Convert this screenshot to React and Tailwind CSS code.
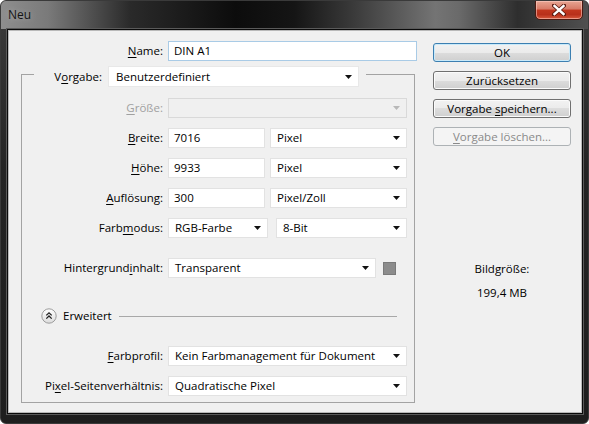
import React from "react";

const Arrow = ({ disabled }) => (
  <svg width="7" height="4" viewBox="0 0 7 4" className="shrink-0">
    <path d="M0 0H7L3.5 4Z" fill={disabled ? "#b8b8b8" : "#111"} />
  </svg>
);

function Select({ w, children, disabled }) {
  return (
    <div
      className={`h-[20px] flex items-center justify-between pl-[6px] pr-[6px] border ${
        disabled ? "bg-[#f0f0f0] border-[#d9d9d9]" : "bg-white border-[#e2e2e2]"
      } ${w}`}
    >
      <span className="whitespace-nowrap">{children}</span>
      <Arrow disabled={disabled} />
    </div>
  );
}

function Input({ w, children, focus }) {
  return (
    <div
      className={`h-[20px] flex items-center pl-[5px] border bg-white ${
        focus ? "border-[#a9cbe6]" : "border-[#e2e2e2]"
      } ${w}`}
    >
      {children}
    </div>
  );
}

function Row({ label, children, className = "" }) {
  return (
    <div className={`flex items-center h-[20px] ${className}`}>
      <div className="w-[141px] text-right whitespace-nowrap">{label}</div>
      <div className="ml-[5px] flex items-center">{children}</div>
    </div>
  );
}

const U = ({ children }) => (
  <span className="underline underline-offset-[2px] decoration-1">{children}</span>
);

function Button({ children, focus, disabled, className = "" }) {
  return (
    <div
      className={`h-[19px] w-[138px] rounded-[3px] flex items-center justify-center border ${
        disabled
          ? "border-[#adb2b5] bg-[#f4f4f4] text-[#8a8a8a]"
          : focus
          ? "border-[#3c7fb1] bg-[linear-gradient(#f2f2f2_0%,#ebebeb_50%,#dddddd_50%,#cfcfcf_100%)] shadow-[inset_0_0_0_1px_#c9eafa]"
          : "border-[#707070] bg-[linear-gradient(#f2f2f2_0%,#ebebeb_50%,#dddddd_50%,#cfcfcf_100%)] shadow-[inset_0_0_0_1px_#fbfbfb]"
      } ${className}`}
    >
      {children}
    </div>
  );
}

export default function App() {
  return (
    <div
      className="w-[589px] h-[424px] bg-white text-[11.5px] leading-[16px] text-black"
      style={{}}
    >
      <div className="w-[589px] h-[424px] flex flex-col rounded-[6px] overflow-hidden border border-[#3a3a3a] bg-[linear-gradient(to_bottom,#3c3c3c,#242424_40%,#1e1e1e)] font-['Open_Sans',sans-serif]">
        {/* title bar */}
        <div className="h-[28px] shrink-0 flex items-start justify-between bg-[linear-gradient(to_right,#8e8e8e_0%,#7a7a7a_8%,#2a2a2a_22%,#0c0c0c_40%,#151515_50%,#3a3a3a_60%,#747474_74%,#6a6a6a_78%,#2e2e2e_88%,#505050_100%)]">
          <div className="pl-[7px] pt-[6px] text-[12px] text-[#141414] [text-shadow:0_0_6px_rgba(255,255,255,0.35)]">
            Neu
          </div>
          <div className="mr-[5px] mt-[-1px] w-[48px] h-[20px] rounded-b-[5px] border border-[#4a1a12] bg-[linear-gradient(#e8a593_0%,#d77a66_45%,#c2371f_50%,#b8301b_75%,#d65a3e_100%)] shadow-[inset_0_0_0_1px_rgba(255,210,200,0.55)] flex items-center justify-center">
            <svg width="14" height="12" viewBox="0 0 14 12">
              <path d="M2 1.5L12 10.5M12 1.5L2 10.5" stroke="#5a1a10" strokeWidth="4" strokeLinecap="square" />
              <path d="M2.5 2L11.5 10M11.5 2L2.5 10" stroke="#fff" strokeWidth="2.4" strokeLinecap="square" />
            </svg>
          </div>
        </div>

        {/* body */}
        <div className="flex-1 pl-[6px] pr-[5px] pb-[9px] flex">
          <div className="flex-1 border border-[#0a0a0a] shadow-[0_0_0_1px_#5a5a5a]">
            <div className="h-full bg-[#f0f0f0] border border-[#b9b9b9] flex pl-[12px] pt-[10px]">
              {/* left column */}
              <div className="w-[396px] flex flex-col">
                <div className="flex items-center h-[20px]">
                  <div className="w-[142px] text-right">
                    <U>N</U>ame:
                  </div>
                  <div className="ml-[5px]">
                    <Input w="w-[249px]" focus>
                      DIN A1
                    </Input>
                  </div>
                </div>

                {/* group */}
                <div className="w-[394px] mt-[5px]">
                  <div className="flex h-[21px]">
                    <div className="w-[13px] h-[13px] mt-[8px] border-t border-l border-[#a3a3a3]" />
                    <div className="w-[68px] text-right self-center whitespace-nowrap">
                      V<U>o</U>rgabe:
                    </div>
                    <div className="ml-[6px]">
                      <div className="h-[21px] w-[251px] flex items-center justify-between pl-[7px] pr-[6px] bg-white border border-[#e8e8e8]">
                        <span>Benutzerdefiniert</span>
                        <Arrow />
                      </div>
                    </div>
                    <div className="flex-1 ml-[7px] h-[13px] mt-[8px] border-t border-r border-[#a3a3a3]" />
                  </div>

                  <div className="border-l border-r border-b border-[#a3a3a3] pt-[11px] pb-[6px] flex flex-col">
                    <Row
                      label={
                        <span className="text-[#a0a0a0]">
                          <U>G</U>röße:
                        </span>
                      }
                    >
                      <Select w="w-[239px]" disabled>
                        {""}
                      </Select>
                    </Row>
                    <Row
                      className="mt-[10px]"
                      label={
                        <>
                          <U>B</U>reite:
                        </>
                      }
                    >
                      <Input w="w-[97px]">7016</Input>
                      <div className="ml-[5px]">
                        <Select w="w-[137px]">Pixel</Select>
                      </div>
                    </Row>
                    <Row
                      className="mt-[10px]"
                      label={
                        <>
                          <U>H</U>öhe:
                        </>
                      }
                    >
                      <Input w="w-[97px]">9933</Input>
                      <div className="ml-[5px]">
                        <Select w="w-[137px]">Pixel</Select>
                      </div>
                    </Row>
                    <Row
                      className="mt-[10px]"
                      label={
                        <>
                          <U>A</U>uflösung:
                        </>
                      }
                    >
                      <Input w="w-[97px]">300</Input>
                      <div className="ml-[5px]">
                        <Select w="w-[137px]">Pixel/Zoll</Select>
                      </div>
                    </Row>
                    <Row
                      className="mt-[10px]"
                      label={
                        <>
                          Farb<U>m</U>odus:
                        </>
                      }
                    >
                      <Select w="w-[100px]">RGB-Farbe</Select>
                      <div className="ml-[8px]">
                        <Select w="w-[131px]">8-Bit</Select>
                      </div>
                    </Row>
                    <Row
                      className="mt-[20px]"
                      label={
                        <>
                          Hintergrund<U>i</U>nhalt:
                        </>
                      }
                    >
                      <Select w="w-[208px]">Transparent</Select>
                      <div className="ml-[7px] w-[13px] h-[13px] bg-[#8c8c8c] border border-[#7a7a7a]" />
                    </Row>

                    {/* Erweitert */}
                    <div className="mt-[30px] h-[16px] flex items-center">
                      <svg width="16" height="16" viewBox="0 0 16 16" className="ml-[19px] shrink-0">
                        <defs>
                          <linearGradient id="eg" x1="0" y1="0" x2="0" y2="1">
                            <stop offset="0" stopColor="#ffffff" />
                            <stop offset="1" stopColor="#dcdcdc" />
                          </linearGradient>
                        </defs>
                        <circle cx="8" cy="8" r="7.2" fill="url(#eg)" stroke="#9c9c9c" strokeWidth="1" />
                        <path d="M5.3 7.4L8 4.8L10.7 7.4M5.3 10.6L8 8L10.7 10.6" fill="none" stroke="#222" strokeWidth="1.3" />
                      </svg>
                      <span className="ml-[6px]">Erweitert</span>
                      <div className="flex-1 ml-[7px] mr-[17px] border-t border-[#a8a8a8]" />
                    </div>

                    <Row
                      className="mt-[22px]"
                      label={
                        <>
                          <U>F</U>arbprofil:
                        </>
                      }
                    >
                      <Select w="w-[239px]">Kein Farbmanagement für Dokument</Select>
                    </Row>
                    <Row
                      className="mt-[10px]"
                      label={
                        <>
                          Pi<U>x</U>el-Seitenverhältnis:
                        </>
                      }
                    >
                      <Select w="w-[239px]">Quadratische Pixel</Select>
                    </Row>
                  </div>
                </div>
              </div>

              {/* right column */}
              <div className="ml-[16px] w-[138px] flex flex-col">
                <Button focus className="mt-[2px]">
                  OK
                </Button>
                <Button className="mt-[9px]">Zurücksetzen</Button>
                <Button className="mt-[9px]">
                  <span>
                    Vorgabe <U>s</U>peichern...
                  </span>
                </Button>
                <Button disabled className="mt-[9px]">
                  <span>
                    <U>V</U>orgabe löschen...
                  </span>
                </Button>
                <div className="mt-[115px] text-center">Bildgröße:</div>
                <div className="mt-[8px] text-center">199,4 MB</div>
              </div>
            </div>
          </div>
        </div>
      </div>
    </div>
  );
}
